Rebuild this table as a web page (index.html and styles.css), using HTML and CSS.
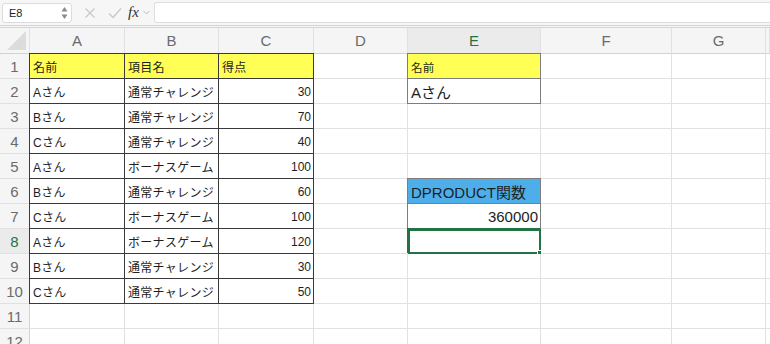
FILE: index.html
```html
<!DOCTYPE html>
<html lang="ja">
<head>
    <meta charset="UTF-8">
    <title>DPRODUCT関数</title>
    <link rel="stylesheet" href="styles.css">
</head>
<body>

    <!-- Name box and formula bar -->
    <div class="formula-bar">
        <div class="name-box">
            <span>E8</span>
            <svg class="spin" width="7" height="14" viewBox="0 0 7 14">
                <path d="M3.5 1 L6.5 5.5 H0.5 Z" fill="#8a8a8a"/>
                <path d="M3.5 13 L6.5 8.5 H0.5 Z" fill="#8a8a8a"/>
            </svg>
        </div>
        <svg class="fb-icon" width="12" height="12" viewBox="0 0 12 12">
            <path d="M1.5 1.5 L10.5 10.5 M10.5 1.5 L1.5 10.5" stroke="#c8c8c8" stroke-width="1.3" fill="none"/>
        </svg>
        <svg class="fb-icon" width="14" height="12" viewBox="0 0 14 12">
            <path d="M1 6.5 L5 10.5 L13 1.5" stroke="#c8c8c8" stroke-width="1.3" fill="none"/>
        </svg>
        <span class="fx">fx</span>
        <svg class="chev" width="7" height="5" viewBox="0 0 7 5">
            <path d="M0.5 0.8 L3.5 4 L6.5 0.8" stroke="#c0c0c0" stroke-width="1" fill="none"/>
        </svg>
        <div class="formula-input"></div>
    </div>

    <!-- Sheet grid -->
    <div class="sheet">
        <div class="row head">
            <div class="corner"><span class="corner-tri"></span></div>
            <div class="col-h">A</div>
            <div class="col-h">B</div>
            <div class="col-h">C</div>
            <div class="col-h">D</div>
            <div class="col-h sel">E</div>
            <div class="col-h">F</div>
            <div class="col-h">G</div>
            <div class="col-h"></div>
        </div>

        <div class="row">
            <div class="row-h">1</div>
            <div class="cell tb tl tt yellow">名前</div>
            <div class="cell tb tt yellow">項目名</div>
            <div class="cell tb tt yellow">得点</div>
            <div class="cell"></div>
            <div class="cell gb gl gt yellow small">名前</div>
            <div class="cell"></div>
            <div class="cell"></div>
            <div class="cell"></div>
        </div>

        <div class="row">
            <div class="row-h">2</div>
            <div class="cell tb tl">Aさん</div>
            <div class="cell tb">通常チャレンジ</div>
            <div class="cell tb num">30</div>
            <div class="cell"></div>
            <div class="cell gb gl big">Aさん</div>
            <div class="cell"></div>
            <div class="cell"></div>
            <div class="cell"></div>
        </div>

        <div class="row">
            <div class="row-h">3</div>
            <div class="cell tb tl">Bさん</div>
            <div class="cell tb">通常チャレンジ</div>
            <div class="cell tb num">70</div>
            <div class="cell"></div>
            <div class="cell"></div>
            <div class="cell"></div>
            <div class="cell"></div>
            <div class="cell"></div>
        </div>

        <div class="row">
            <div class="row-h">4</div>
            <div class="cell tb tl">Cさん</div>
            <div class="cell tb">通常チャレンジ</div>
            <div class="cell tb num">40</div>
            <div class="cell"></div>
            <div class="cell"></div>
            <div class="cell"></div>
            <div class="cell"></div>
            <div class="cell"></div>
        </div>

        <div class="row">
            <div class="row-h">5</div>
            <div class="cell tb tl">Aさん</div>
            <div class="cell tb">ボーナスゲーム</div>
            <div class="cell tb num">100</div>
            <div class="cell"></div>
            <div class="cell"></div>
            <div class="cell"></div>
            <div class="cell"></div>
            <div class="cell"></div>
        </div>

        <div class="row">
            <div class="row-h">6</div>
            <div class="cell tb tl">Bさん</div>
            <div class="cell tb">通常チャレンジ</div>
            <div class="cell tb num">60</div>
            <div class="cell"></div>
            <div class="cell gb gl gt blue big">DPRODUCT関数</div>
            <div class="cell"></div>
            <div class="cell"></div>
            <div class="cell"></div>
        </div>

        <div class="row">
            <div class="row-h">7</div>
            <div class="cell tb tl">Cさん</div>
            <div class="cell tb">ボーナスゲーム</div>
            <div class="cell tb num">100</div>
            <div class="cell"></div>
            <div class="cell gb gl big num">360000</div>
            <div class="cell"></div>
            <div class="cell"></div>
            <div class="cell"></div>
        </div>

        <div class="row">
            <div class="row-h sel">8</div>
            <div class="cell tb tl">Aさん</div>
            <div class="cell tb">ボーナスゲーム</div>
            <div class="cell tb num">120</div>
            <div class="cell"></div>
            <div class="cell active"><span class="fill-handle"></span></div>
            <div class="cell"></div>
            <div class="cell"></div>
            <div class="cell"></div>
        </div>

        <div class="row">
            <div class="row-h">9</div>
            <div class="cell tb tl">Bさん</div>
            <div class="cell tb">通常チャレンジ</div>
            <div class="cell tb num">30</div>
            <div class="cell"></div>
            <div class="cell"></div>
            <div class="cell"></div>
            <div class="cell"></div>
            <div class="cell"></div>
        </div>

        <div class="row">
            <div class="row-h">10</div>
            <div class="cell tb tl">Cさん</div>
            <div class="cell tb">通常チャレンジ</div>
            <div class="cell tb num">50</div>
            <div class="cell"></div>
            <div class="cell"></div>
            <div class="cell"></div>
            <div class="cell"></div>
            <div class="cell"></div>
        </div>

        <div class="row">
            <div class="row-h">11</div>
            <div class="cell"></div>
            <div class="cell"></div>
            <div class="cell"></div>
            <div class="cell"></div>
            <div class="cell"></div>
            <div class="cell"></div>
            <div class="cell"></div>
            <div class="cell"></div>
        </div>

        <div class="row">
            <div class="row-h">12</div>
            <div class="cell"></div>
            <div class="cell"></div>
            <div class="cell"></div>
            <div class="cell"></div>
            <div class="cell"></div>
            <div class="cell"></div>
            <div class="cell"></div>
            <div class="cell"></div>
        </div>
    </div>

</body>
</html>
```

FILE: styles.css
```css
/* General styles */
body {
    margin: 0;
    background-color: #fff;
    font-family: "Liberation Sans", "Noto Sans CJK JP", sans-serif;
    color: #1e1e1e;
    width: 770px;
    height: 344px;
    overflow: hidden;
}

/* Formula bar */
.formula-bar {
    height: 25px;
    display: flex;
    align-items: center;
    background-color: #f6f6f6;
    border-bottom: 3px double #d4d4d4;
}

.name-box {
    width: 70px;
    height: 20px;
    margin-left: 2px;
    box-sizing: border-box;
    background-color: #fff;
    border: 1px solid #dcdcdc;
    border-radius: 3px;
    display: flex;
    align-items: center;
    justify-content: space-between;
    padding: 0 3px 0 6px;
    font-size: 11px;
}

.fb-icon {
    margin-left: 12px;
}

.fx {
    margin-left: 6px;
    font-family: "Liberation Serif", serif;
    font-style: italic;
    font-size: 15px;
    color: #333;
}

.chev {
    margin-left: 4px;
}

.formula-input {
    flex: 1;
    height: 19px;
    margin-left: 4px;
    background-color: #fff;
    border: 1px solid #dedede;
    border-right: none;
    border-radius: 3px 0 0 3px;
}

/* Sheet grid */
.sheet {
    --cols: 30px 95px 94px 95px 94px 133px 131px 94px 1fr;
}

.row {
    display: grid;
    grid-template-columns: var(--cols);
    height: 25px;
}

.row.head {
    height: 26px;
}

.row > div {
    box-sizing: border-box;
    border-right: 1px solid #e1e1e1;
    border-bottom: 1px solid #e1e1e1;
    position: relative;
}

/* Header cells */
.corner,
.col-h,
.row-h {
    background-color: #f5f5f5;
    color: #6b6b6b;
    font-size: 15px;
    display: flex;
    align-items: center;
    justify-content: center;
}

.row > .col-h,
.row > .corner {
    border-bottom-color: #d2d2d2;
}

.row > .row-h {
    border-right-color: #d2d2d2;
}

.corner-tri {
    position: absolute;
    right: 3px;
    bottom: 3px;
    width: 0;
    height: 0;
    border-left: 19px solid transparent;
    border-bottom: 19px solid #dcdcdc;
}

.col-h.sel {
    background-color: #ebebeb;
    color: #217346;
}

.row > .col-h.sel {
    border-bottom: 1px solid #217346;
}

.row-h.sel {
    background-color: #ebebeb;
    color: #217346;
}

.row > .row-h.sel {
    border-right: 1px solid #217346;
}

/* Data cells */
.cell {
    display: flex;
    align-items: center;
    padding: 1px 2px 0 3px;
    font-size: 12px;
    letter-spacing: 0.3px;
    white-space: nowrap;
    overflow: hidden;
}

.cell.small {
    font-size: 11.5px;
}

.cell.big {
    font-size: 15px;
    letter-spacing: 0;
}

.cell.num {
    justify-content: flex-end;
    letter-spacing: 0;
}

/* Dark table borders */
.row > .tb {
    border-right-color: #3a3a3a;
    border-bottom-color: #3a3a3a;
}

.tl {
    box-shadow: -1px 0 0 #3a3a3a;
}

.tt {
    box-shadow: 0 -1px 0 #3a3a3a;
}

.tl.tt {
    box-shadow: -1px 0 0 #3a3a3a, 0 -1px 0 #3a3a3a, -1px -1px 0 #3a3a3a;
}

/* Grey-bordered lookup cells */
.row > .gb {
    border-right-color: #7d7d7d;
    border-bottom-color: #7d7d7d;
}

.gl {
    box-shadow: -1px 0 0 #7d7d7d;
}

.gl.gt {
    box-shadow: -1px 0 0 #7d7d7d, 0 -1px 0 #7d7d7d, -1px -1px 0 #7d7d7d;
}

.yellow {
    background-color: #ffff55;
}

.blue {
    background-color: #4eaeea;
}

/* Active cell */
.row > .cell.active {
    border: none;
    box-shadow: -1px -1px 0 #217346;
    outline: 2px solid #217346;
    outline-offset: -2px;
}

.fill-handle {
    position: absolute;
    right: -3px;
    bottom: -3px;
    width: 5px;
    height: 5px;
    background-color: #217346;
    border: 1px solid #fff;
    z-index: 2;
}
```
